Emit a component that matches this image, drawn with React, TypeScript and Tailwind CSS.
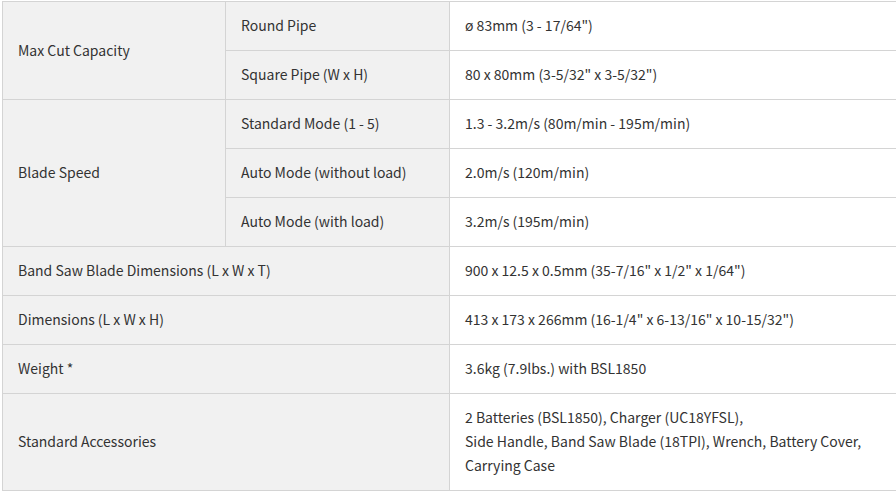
import React from 'react';

const font = { fontFamily: '"Noto Sans CJK KR", "Noto Sans", sans-serif' };

const labelCell = 'border border-[#d4d4d4] bg-[#f1f1f1] px-[15px] pt-[11px] pb-[13px] align-middle';
const valueCell = 'border border-[#d4d4d4] bg-white px-[15px] pt-[11px] pb-[13px] align-middle whitespace-nowrap';

const App: React.FC = () => {
  return (
    <div className="w-[896px] h-[494px] overflow-hidden bg-white pt-px pl-[2px]" style={font}>
      <table className="w-[900px] border-collapse text-[14px] leading-[24px] text-[#333]">
        <colgroup>
          <col className="w-[223px]" />
          <col className="w-[224px]" />
          <col />
        </colgroup>
        <tbody>
          <tr>
            <td rowSpan={2} className={labelCell}>Max Cut Capacity</td>
            <td className={labelCell}>Round Pipe</td>
            <td className={valueCell}>ø 83mm (3 - 17/64")</td>
          </tr>
          <tr>
            <td className={labelCell}>Square Pipe (W x H)</td>
            <td className={valueCell}>80 x 80mm (3-5/32" x 3-5/32")</td>
          </tr>
          <tr>
            <td rowSpan={3} className={labelCell}>Blade Speed</td>
            <td className={labelCell}>Standard Mode (1 - 5)</td>
            <td className={valueCell}>1.3 - 3.2m/s (80m/min - 195m/min)</td>
          </tr>
          <tr>
            <td className={labelCell}>Auto Mode (without load)</td>
            <td className={valueCell}>2.0m/s (120m/min)</td>
          </tr>
          <tr>
            <td className={labelCell}>Auto Mode (with load)</td>
            <td className={valueCell}>3.2m/s (195m/min)</td>
          </tr>
          <tr>
            <td colSpan={2} className={labelCell}>Band Saw Blade Dimensions (L x W x T)</td>
            <td className={valueCell}>900 x 12.5 x 0.5mm (35-7/16" x 1/2" x 1/64")</td>
          </tr>
          <tr>
            <td colSpan={2} className={labelCell}>Dimensions (L x W x H)</td>
            <td className={valueCell}>413 x 173 x 266mm (16-1/4" x 6-13/16" x 10-15/32")</td>
          </tr>
          <tr>
            <td colSpan={2} className={labelCell}>Weight *</td>
            <td className={valueCell}>3.6kg (7.9lbs.) with BSL1850</td>
          </tr>
          <tr>
            <td colSpan={2} className={labelCell}>Standard Accessories</td>
            <td className={valueCell}>
              2 Batteries (BSL1850), Charger (UC18YFSL),
              <br />
              Side Handle, Band Saw Blade (18TPI), Wrench, Battery Cover,
              <br />
              Carrying Case
            </td>
          </tr>
        </tbody>
      </table>
    </div>
  );
};

export default App;
